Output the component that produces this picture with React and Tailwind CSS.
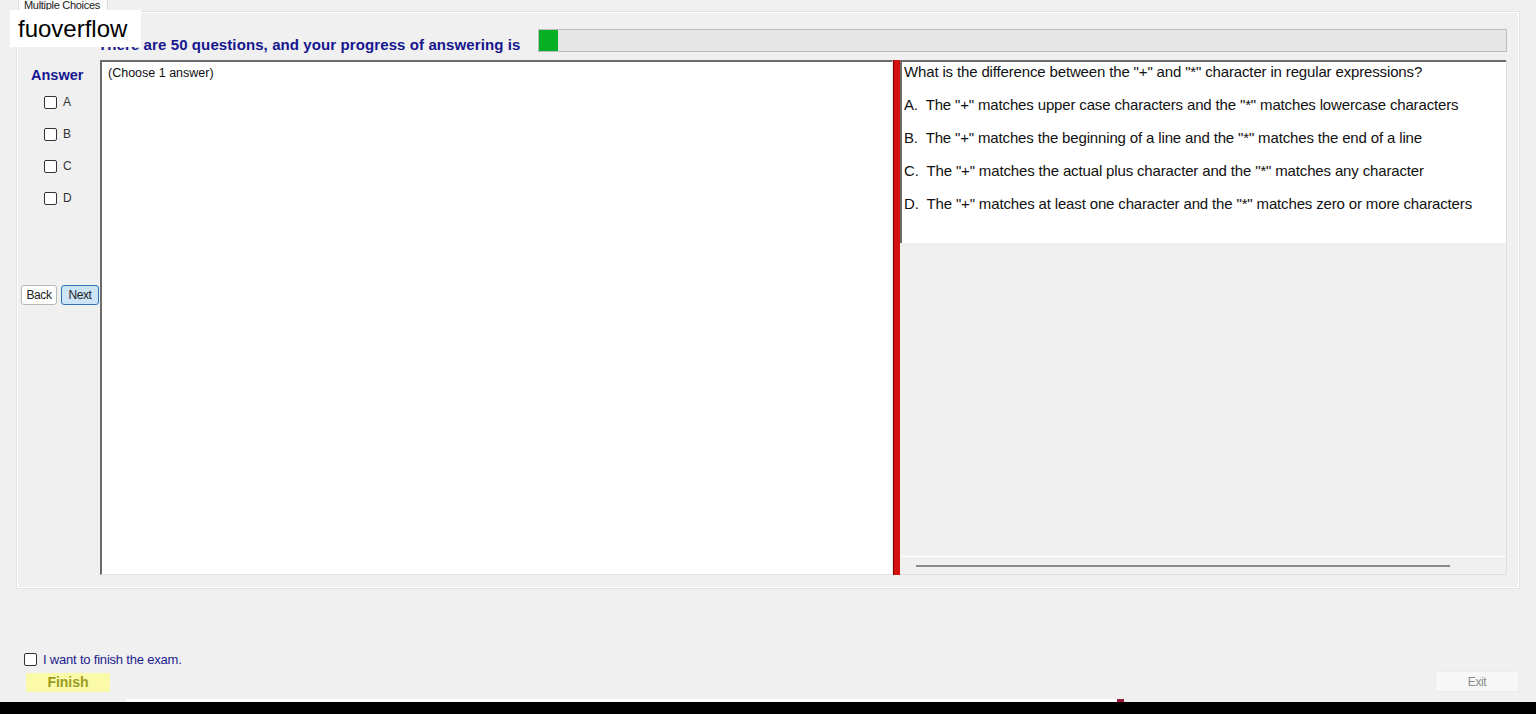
import React from 'react';

const options = [
  'A.  The "+" matches upper case characters and the "*" matches lowercase characters',
  'B.  The "+" matches the beginning of a line and the "*" matches the end of a line',
  'C.  The "+" matches the actual plus character and the "*" matches any character',
  'D.  The "+" matches at least one character and the "*" matches zero or more characters',
];

function Box() {
  return <div className="w-[13px] h-[13px] rounded-[2px] border border-[#333] bg-white shrink-0" />;
}

export default function App() {
  return (
    <div className="relative w-[1536px] h-[714px] overflow-hidden bg-[#f0f0f0] flex flex-col font-['Liberation_Sans',Arial,sans-serif] text-black">
      {/* tab header */}
      <div className="ml-[18px] w-[90px] h-[12px] overflow-hidden bg-[#fbfbfb] border-x border-[#dcdcdc]">
        <div className="pl-[5px] text-[11px] leading-[12px] -mt-[1px] text-[#222] tracking-[-0.3px]">Multiple Choices</div>
      </div>

      {/* tab panel */}
      <div className="ml-[17px] w-[1502px] h-[576px] border border-white shadow-[0_0_0_1px_#e4e4e4] flex flex-col">
        {/* header row */}
        <div className="h-[47px] flex">
          <div className="ml-[80px] mt-[23px] w-[440px] text-[15px] leading-[17px] font-bold text-[#16168f] tracking-[0.1px]">
            There are 50 questions, and your progress of answering is
          </div>
          <div className="mt-[16px] w-[969px] h-[23px] bg-[#e6e6e6] border border-[#bcbcbc] flex">
            <div className="w-[19px] h-full bg-[#06b025]" />
          </div>
        </div>

        {/* body */}
        <div className="h-[515px] flex">
          {/* answer column */}
          <div className="w-[82px] shrink-0 flex flex-col">
            <div className="pl-[13px] pt-[7px] text-[14.5px] leading-[17px] font-bold text-[#16168f]">Answer</div>
            <div className="mt-[2px] pl-[26px] flex flex-col">
              {['A', 'B', 'C', 'D'].map((l) => (
                <div key={l} className="h-[32px] flex items-center gap-[6px]">
                  <Box />
                  <span className="text-[12px] text-[#333]">{l}</span>
                </div>
              ))}
            </div>
            <div className="mt-[71px] pl-[3px] flex gap-[4px]">
              <button className="w-[36px] h-[20px] bg-white border border-[#b8b8b8] rounded-[3px] text-[12px] tracking-[-0.4px] text-[#222]">Back</button>
              <button className="w-[38px] h-[20px] bg-[#cce4f7] border border-[#2f74b5] rounded-[3px] text-[12px] tracking-[-0.4px] text-[#222]">Next</button>
            </div>
          </div>

          {/* answer text area */}
          <div className="w-[793px] shrink-0 bg-white border-t-2 border-l-2 border-[#6b6b6b] border-b border-r border-b-[#e6e6e6] border-r-[#e6e6e6] pl-[6px] pt-[4px]">
            <div className="text-[12.5px] leading-[15px] text-[#111]">(Choose 1 answer)</div>
          </div>

          {/* splitter */}
          <div className="w-[7px] shrink-0 bg-[#d40f0f] border-l border-[#7d0000]" />

          {/* question panel */}
          <div className="w-[607px] shrink-0 flex flex-col border-r border-b border-[#dedede]">
            <div className="h-[183px] bg-white border-t-2 border-l-2 border-[#6b6b6b] pl-[2px] pt-[1px] text-[15px] leading-[17px] text-[#111] tracking-[-0.15px]">
              <div>What is the difference between the "+" and "*" character in regular expressions?</div>
              {options.map((o) => (
                <div key={o} className="mt-[16px] whitespace-pre">{o}</div>
              ))}
            </div>
            <div className="flex-1" />
            <div className="h-[18px] border-t border-white flex items-center pl-[16px]">
              <div className="w-[534px] h-[2px] bg-[#8a8a8a]" />
            </div>
          </div>
        </div>
      </div>

      {/* bottom area */}
      <div className="flex-1 flex items-end justify-between pb-[7px]">
        <div className="pl-[24px] flex flex-col">
          <div className="flex items-center gap-[6px]">
            <Box />
            <span className="text-[13px] leading-[15px] text-[#1c1c8e] tracking-[-0.2px]">I want to finish the exam.</span>
          </div>
          <div className="mt-[6px] ml-[2px] w-[84px] h-[19px] bg-[#fafaa8] flex items-center justify-center text-[14px] font-bold text-[#9a9a1e]">Finish</div>
        </div>
        <div className="mr-[17px] w-[84px] h-[21px] bg-[#f7f7f7] border border-[#ececec] flex items-center justify-center text-[12px] text-[#8c8c8c] tracking-[-0.4px]">Exit</div>
      </div>

      {/* taskbar edge */}
      <div className="h-[3px] flex">
        <div className="ml-[126px] w-[991px] bg-white" />
        <div className="w-[7px] bg-[#9b1a3a]" />
      </div>
      <div className="h-[12px] bg-black" />

      {/* watermark overlay */}
      <div className="absolute left-[10px] top-[10px] w-[131px] h-[37px] bg-white pl-[8px] text-[24px] leading-[37px] text-black">fuoverflow</div>
    </div>
  );
}
